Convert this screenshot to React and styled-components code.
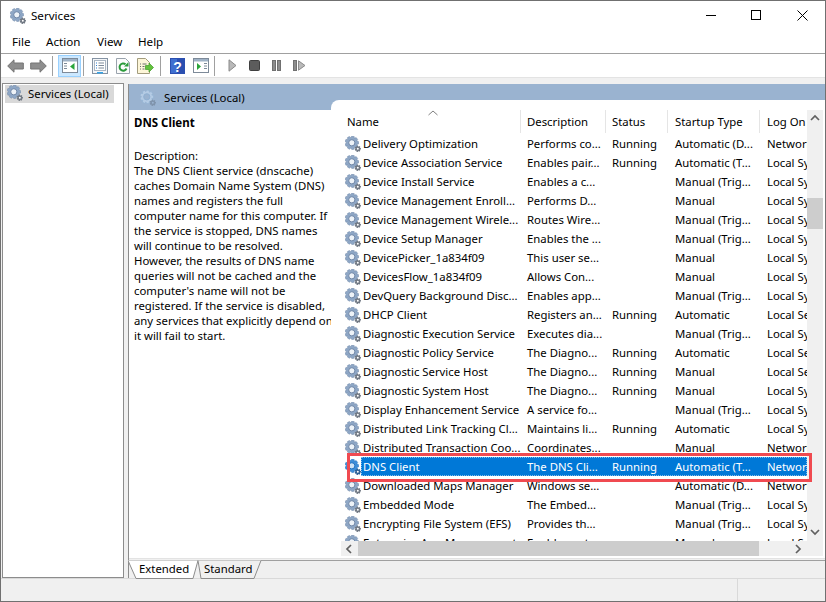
import React from 'react';
import styled, { createGlobalStyle } from 'styled-components';

const GlobalStyle = createGlobalStyle`
  html, body { margin: 0; padding: 0; background: #fff; }
  body { font-family: "Noto Sans", "Liberation Sans", sans-serif; font-size: 11.35px; color: #000; overflow: hidden; }
  * { box-sizing: border-box; }
`;

const Window = styled.div`
  width: 826px;
  height: 602px;
  border: 1px solid #707070;
  display: flex;
  flex-direction: column;
  background: #fff;
`;

const TitleBar = styled.div`
  height: 29px;
  flex: none;
  display: flex;
  align-items: center;
  padding-left: 9px;
`;

const TitleText = styled.span`
  margin-left: 5px;
  font-size: 11.6px;
  flex: 1;
`;

const WinButton = styled.div`
  width: 45.5px;
  height: 29px;
  display: flex;
  align-items: center;
  justify-content: center;
`;

const MenuBar = styled.div`
  height: 24px;
  flex: none;
  display: flex;
  align-items: center;
  padding-left: 11px;
  border-bottom: 1px solid #a0a0a0;
`;

const MenuItem = styled.span`
  width: ${p => p.$w}px;
  font-size: 11.6px;
`;

const Toolbar = styled.div`
  height: 24px;
  flex: none;
  display: flex;
  align-items: center;
  padding-left: 3px;
  border-bottom: 1px solid #e3e3e3;
`;

const ToolButton = styled.div`
  width: ${p => p.$w || 23}px;
  height: 22px;
  display: flex;
  align-items: center;
  justify-content: center;
  background: ${p => (p.$active ? '#cce8ff' : 'transparent')};
  border: 1px solid ${p => (p.$active ? '#99d1ff' : 'transparent')};
`;

const ToolSep = styled.div`
  width: 1px;
  height: 20px;
  background: #a0a0a0;
  margin: 0 ${p => p.$r}px 0 ${p => p.$l}px;
`;

const Main = styled.div`
  flex: 1;
  min-height: 0;
  display: flex;
  gap: 4px;
  padding: 5px 0 0 1px;
  background: #f0f0f0;
`;

const TreePane = styled.div`
  width: 122px;
  background: #fff;
  border: 1px solid #8c8c8c;
  padding: 1px 9px 0 2px;
`;

const TreeItem = styled.div`
  height: 18px;
  background: #d9d9d9;
  display: flex;
  align-items: center;
  gap: 5px;
  padding: 0 0 2px 2px;
`;

const RightPane = styled.div`
  flex: 1;
  min-width: 0;
  margin-top: 1px;
  display: flex;
  flex-direction: column;
  border-left: 1px solid #8c8c8c;
`;

const Band = styled.div`
  height: 26px;
  flex: none;
  background: #9ab3d0;
  display: flex;
  align-items: flex-start;
  gap: 8px;
  padding: 6px 0 0 11px;
  line-height: 16px;
`;

const Body = styled.div`
  height: 449px;
  flex: none;
  display: flex;
  background: #fff;
  border-bottom: 1px solid #e3e3e3;
`;

const Details = styled.div`
  width: 202px;
  flex: none;
  padding: 5px 0 0 5px;
  line-height: 15px;
  white-space: nowrap;
`;

const DetailsTitle = styled.div`
  font-weight: 700;
  font-size: 11.5px;
  margin-bottom: 18px;
`;

const ListPanel = styled.div`
  position: relative;
  flex: 1;
  min-width: 0;
  margin-top: -10px;
  padding: 10px 2px 1px 10px;
  background: #fff;
  border-top-left-radius: 8px;
  display: grid;
  grid-template-columns: 466px 16px;
  grid-template-rows: 431px 15px;
`;

const Table = styled.div`
  overflow: hidden;
  min-width: 0;
`;

const HeaderRow = styled.div`
  display: flex;
  height: 24px;
  white-space: nowrap;
`;

const HeaderCell = styled.div`
  position: relative;
  flex: none;
  width: ${p => p.$w}px;
  height: 23px;
  padding-left: ${p => p.$pad}px;
  line-height: 23px;
  border-right: ${p => (p.$last ? 'none' : '1px solid #e5e5e5')};
`;

const SortCaret = styled.svg`
  position: absolute;
  left: 86px;
  top: 0;
`;

const Row = styled.div`
  display: flex;
  height: 19px;
  white-space: nowrap;
`;

const RowIcon = styled.div`
  width: 20px;
  flex: none;
  padding: 2px 0 0 4px;
`;

const RowCells = styled.div`
  flex: none;
  width: 446px;
  display: flex;
  line-height: 19px;
  background: ${p => (p.$selected ? '#0078d7' : 'transparent')};
  color: ${p => (p.$selected ? '#fff' : '#000')};
  outline: ${p => (p.$selected ? '1px dotted #ffffff80' : 'none')};
  outline-offset: -1px;
`;

const Cell = styled.div`
  flex: none;
  width: ${p => p.$w}px;
  padding-left: ${p => p.$pad}px;
  overflow: hidden;
`;

const VScroll = styled.div`
  background: #f0f0f0;
  display: flex;
  flex-direction: column;
  align-items: center;
`;

const ScrollArrow = styled.div`
  height: ${p => p.$h}px;
  width: ${p => p.$w}px;
  flex: none;
  display: flex;
  align-items: center;
  justify-content: center;
`;

const VThumb = styled.div`
  width: 16px;
  height: 31px;
  margin-top: 71px;
  background: #cdcdcd;
`;

const HScroll = styled.div`
  background: #f0f0f0;
  display: flex;
`;

const HThumb = styled.div`
  width: 401px;
  background: #cdcdcd;
`;

const Corner = styled.div`
  background: #f0f0f0;
`;

const Spacer = styled.div`
  flex: 1;
`;

const Highlight = styled.div`
  position: absolute;
  left: 16px;
  top: 353px;
  width: 465px;
  height: 29px;
  border: 3px solid #f04a50;
  pointer-events: none;
`;

const TabStrip = styled.div`
  height: 19px;
  flex: none;
  margin-top: 1px;
  display: flex;
  border-top: 1px solid #a0a0a0;
  background: #f0f0f0;
`;

const Tab = styled.div`
  position: relative;
  width: ${p => p.$w}px;
  height: 19px;
  margin-top: -1px;
  margin-left: ${p => p.$l}px;
  flex: none;
  line-height: 17px;
  padding-left: ${p => p.$pad}px;
`;

const TabShape = styled.svg`
  position: absolute;
  left: 0;
  top: 0;
`;

const TabLabel = styled.span`
  position: relative;
`;

const StatusBar = styled.div`
  height: 23px;
  flex: none;
  display: flex;
  justify-content: flex-end;
  background: #f0f0f0;
  border-top: 1px solid #d9d9d9;
`;

const StatusCell = styled.div`
  width: ${p => p.$w}px;
  border-left: 1px solid #d9d9d9;
`;

const gearPath = (cx, cy, outer, inner, teeth) => {
  const step = (Math.PI * 2) / teeth;
  let d = '';
  for (let i = 0; i < teeth; i++) {
    const a = i * step;
    const pts = [
      [inner, a - step * 0.5],
      [outer, a - step * 0.25],
      [outer, a + step * 0.25],
    ];
    pts.forEach(([r, t], j) => {
      const x = (cx + r * Math.cos(t)).toFixed(2);
      const y = (cy + r * Math.sin(t)).toFixed(2);
      d += `${i === 0 && j === 0 ? 'M' : 'L'}${x} ${y} `;
    });
  }
  return d + 'Z';
};

const BIG_GEAR = gearPath(6.8, 6.8, 6.8, 5.2, 9);
const SMALL_GEAR = gearPath(12.8, 12.8, 3.2, 2.2, 7);

const Gear = ({ tone = 'plain' }) => {
  const big = { plain: '#8ea7c6', blue: '#3f8ed8', band: '#b4cbe4' }[tone];
  const edge = { plain: '#6f86a6', blue: '#1f6fc0', band: '#8fb0d2' }[tone];
  const hole = { plain: '#eef3f8', blue: '#cfe3f6', band: '#9ab3d0' }[tone];
  const small = { plain: '#6f7782', blue: '#2a5f95', band: '#7f93ab' }[tone];
  return (
    <svg width="16" height="16" viewBox="0 0 16 16">
      <path d={BIG_GEAR} fill={big} stroke={edge} strokeWidth="0.5" />
      <circle cx="6.8" cy="6.8" r="3.1" fill={hole} stroke={edge} strokeWidth="1" />
      <path d={SMALL_GEAR} fill={small} />
      <circle cx="12.8" cy="12.8" r="1" fill={tone === 'band' ? '#9ab3d0' : '#fff'} />
    </svg>
  );
};

const ArrowIcon = ({ flip }) => (
  <svg width="17" height="14" viewBox="0 0 17 14" style={flip ? { transform: 'scaleX(-1)' } : undefined}>
    <path d="M.7 7 7 .8V4H16.3V10H7V13.2Z" fill="#8e8e8e" stroke="#747474" />
  </svg>
);

const PaneIcon = () => (
  <svg width="16" height="15" viewBox="0 0 16 15">
    <rect x=".5" y=".5" width="15" height="14" fill="#fff" stroke="#7d8a99" />
    <rect x="1" y="1" width="14" height="2.5" fill="#9fb2c6" />
    <path d="M2 5.5h3M2 8h3M2 10.5h3" stroke="#7d8a99" />
    <path d="M12.5 5v7L8 8.5Z" fill="#2aa53a" />
  </svg>
);

const PropsIcon = () => (
  <svg width="16" height="16" viewBox="0 0 16 16">
    <rect x=".5" y=".5" width="15" height="15" fill="#f4f6f8" stroke="#8593a3" />
    <rect x="2.5" y="2.5" width="11" height="10" fill="#fff" stroke="#a9b5c2" />
    <path d="M4 5h1M4 7.5h1M4 10h1" stroke="#2f7fd0" />
    <path d="M6.5 5h5.5M6.5 7.5h5.5M6.5 10h5.5" stroke="#7d8a99" />
    <rect x="5" y="14" width="6" height="1.5" fill="#35a4e8" />
  </svg>
);

const RefreshIcon = () => (
  <svg width="14" height="16" viewBox="0 0 14 16">
    <path d="M.5.5H9.5L13.5 4.5V15.5H.5Z" fill="#fbfbfb" stroke="#9aa3ad" />
    <path d="M10.5 10.5a3.6 3.6 0 1 1-1-4.2" fill="none" stroke="#2a9a3a" strokeWidth="2" />
    <path d="M8 8.5h4.5V4Z" fill="#2a9a3a" />
  </svg>
);

const ExportIcon = () => (
  <svg width="17" height="16" viewBox="0 0 17 16">
    <path d="M.5.5H8.5L12.5 4.5V15.5H.5Z" fill="#fdf6d8" stroke="#a39c7e" />
    <path d="M3 6h1M3 8.5h1M3 11h1M5.5 6h4M5.5 8.5h2M5.5 11h2" stroke="#6e6e6e" />
    <path d="M8.5 7.5H12V5L16.5 9.5 12 14V11.5H8.5Z" fill="#63c23c" stroke="#3f9a25" strokeWidth=".7" />
  </svg>
);

const HelpIcon = () => (
  <svg width="15" height="16" viewBox="0 0 15 16">
    <rect width="15" height="16" fill="#2b4fb0" />
    <rect x="1" y="1" width="6" height="14" fill="#3f6fd0" />
    <text x="7.5" y="13.5" fontSize="14" fontWeight="700" textAnchor="middle" fill="#fff" fontFamily="Liberation Sans, sans-serif">?</text>
  </svg>
);

const ConsoleIcon = () => (
  <svg width="16" height="15" viewBox="0 0 16 15">
    <rect x=".5" y=".5" width="15" height="14" fill="#fff" stroke="#7d8a99" />
    <rect x="1" y="1" width="14" height="2.5" fill="#9fb2c6" />
    <path d="M11 5.5h3M11 8h3M11 10.5h3" stroke="#7d8a99" />
    <path d="M4 5v7L8 8.5Z" fill="#2aa53a" />
  </svg>
);

const PlayIcon = () => (
  <svg width="9" height="13" viewBox="0 0 9 13">
    <path d="M1 .8V12.2L8 6.5Z" fill="#b9b9b9" stroke="#8a8a8a" />
  </svg>
);

const StopIcon = () => (
  <svg width="11" height="11" viewBox="0 0 11 11">
    <rect x=".5" y=".5" width="10" height="10" rx="1" fill="#5c5c5c" stroke="#3f3f3f" />
  </svg>
);

const PauseIcon = () => (
  <svg width="9" height="11" viewBox="0 0 9 11">
    <rect x=".5" y=".5" width="3" height="10" fill="#8c8c8c" stroke="#707070" />
    <rect x="5.5" y=".5" width="3" height="10" fill="#8c8c8c" stroke="#707070" />
  </svg>
);

const ResumeIcon = () => (
  <svg width="13" height="11" viewBox="0 0 13 11">
    <rect x=".5" y=".5" width="3" height="10" fill="#8c8c8c" stroke="#707070" />
    <path d="M5.5.8V10.2L12 5.5Z" fill="#b9b9b9" stroke="#8a8a8a" />
  </svg>
);

const Chevron = ({ dir }) => {
  const paths = {
    up: 'M1 6 5 2 9 6',
    down: 'M1 2 5 6 9 2',
    left: 'M6 1 2 5 6 9',
    right: 'M2 1 6 5 2 9',
  };
  return (
    <svg width="10" height="10" viewBox="0 0 10 10">
      <path d={paths[dir]} fill="none" stroke="#606060" strokeWidth="1.7" />
    </svg>
  );
};

const NET = 'Network S...';
const SYS = 'Local Syste...';
const SVC = 'Local Service';

const services = [
  ['Delivery Optimization', 'Performs co...', 'Running', 'Automatic (D...', NET],
  ['Device Association Service', 'Enables pair...', 'Running', 'Automatic (T...', SYS],
  ['Device Install Service', 'Enables a c...', '', 'Manual (Trig...', SYS],
  ['Device Management Enroll...', 'Performs D...', '', 'Manual', SYS],
  ['Device Management Wirele...', 'Routes Wire...', '', 'Manual (Trig...', SYS],
  ['Device Setup Manager', 'Enables the ...', '', 'Manual (Trig...', SYS],
  ['DevicePicker_1a834f09', 'This user se...', '', 'Manual', SYS],
  ['DevicesFlow_1a834f09', 'Allows Con...', '', 'Manual', SYS],
  ['DevQuery Background Disc...', 'Enables app...', '', 'Manual (Trig...', SYS],
  ['DHCP Client', 'Registers an...', 'Running', 'Automatic', SVC],
  ['Diagnostic Execution Service', 'Executes dia...', '', 'Manual (Trig...', SYS],
  ['Diagnostic Policy Service', 'The Diagno...', 'Running', 'Automatic', SVC],
  ['Diagnostic Service Host', 'The Diagno...', 'Running', 'Manual', SVC],
  ['Diagnostic System Host', 'The Diagno...', 'Running', 'Manual', SYS],
  ['Display Enhancement Service', 'A service fo...', '', 'Manual (Trig...', SYS],
  ['Distributed Link Tracking Cl...', 'Maintains li...', 'Running', 'Automatic', SYS],
  ['Distributed Transaction Coo...', 'Coordinates...', '', 'Manual', NET],
  ['DNS Client', 'The DNS Cli...', 'Running', 'Automatic (T...', NET],
  ['Downloaded Maps Manager', 'Windows se...', '', 'Automatic (D...', NET],
  ['Embedded Mode', 'The Embed...', '', 'Manual (Trig...', SYS],
  ['Encrypting File System (EFS)', 'Provides th...', '', 'Manual (Trig...', SYS],
  ['Enterprise App Management...', 'Enables ent...', '', 'Manual', SYS],
];

const descriptionLines = [
  'Description:',
  'The DNS Client service (dnscache)',
  'caches Domain Name System (DNS)',
  'names and registers the full',
  'computer name for this computer. If',
  'the service is stopped, DNS names',
  'will continue to be resolved.',
  'However, the results of DNS name',
  'queries will not be cached and the',
  "computer's name will not be",
  'registered. If the service is disabled,',
  'any services that explicitly depend on',
  'it will fail to start.',
];

const App = () => (
  <Window>
    <GlobalStyle />
    <TitleBar>
      <Gear />
      <TitleText>Services</TitleText>
      <WinButton>
        <svg width="11" height="11" viewBox="0 0 11 11"><path d="M0 5.5h10" stroke="#000" /></svg>
      </WinButton>
      <WinButton>
        <svg width="11" height="11" viewBox="0 0 11 11"><rect x=".5" y=".5" width="9" height="9" fill="none" stroke="#000" /></svg>
      </WinButton>
      <WinButton>
        <svg width="11" height="11" viewBox="0 0 11 11"><path d="M.5.5l10 10M10.5.5l-10 10" stroke="#000" /></svg>
      </WinButton>
    </TitleBar>

    <MenuBar>
      <MenuItem $w={34}>File</MenuItem>
      <MenuItem $w={51}>Action</MenuItem>
      <MenuItem $w={41}>View</MenuItem>
      <MenuItem $w={40}>Help</MenuItem>
    </MenuBar>

    <Toolbar>
      <ToolButton><ArrowIcon /></ToolButton>
      <ToolButton><ArrowIcon flip /></ToolButton>
      <ToolSep $l={2} $r={5} />
      <ToolButton $active><PaneIcon /></ToolButton>
      <ToolSep $l={2} $r={4} />
      <ToolButton><PropsIcon /></ToolButton>
      <ToolButton><RefreshIcon /></ToolButton>
      <ToolButton><ExportIcon /></ToolButton>
      <ToolSep $l={3} $r={5} />
      <ToolButton><HelpIcon /></ToolButton>
      <ToolButton><ConsoleIcon /></ToolButton>
      <ToolSep $l={2} $r={6} />
      <ToolButton $w={22}><PlayIcon /></ToolButton>
      <ToolButton $w={22}><StopIcon /></ToolButton>
      <ToolButton><PauseIcon /></ToolButton>
      <ToolButton><ResumeIcon /></ToolButton>
    </Toolbar>

    <Main>
      <TreePane>
        <TreeItem>
          <Gear />
          <span>Services (Local)</span>
        </TreeItem>
      </TreePane>

      <RightPane>
        <Band>
          <Gear tone="band" />
          <span>Services (Local)</span>
        </Band>

        <Body>
          <Details>
            <DetailsTitle>DNS Client</DetailsTitle>
            {descriptionLines.map(line => (
              <div key={line}>{line}</div>
            ))}
          </Details>

          <ListPanel>
            <Table>
              <HeaderRow>
                <HeaderCell $w={180} $pad={6}>
                  Name
                  <SortCaret width="12" height="6" viewBox="0 0 12 6">
                    <path d="M1.5 5 6 1l4.5 4" fill="none" stroke="#808080" />
                  </SortCaret>
                </HeaderCell>
                <HeaderCell $w={85} $pad={6}>Description</HeaderCell>
                <HeaderCell $w={62} $pad={6}>Status</HeaderCell>
                <HeaderCell $w={92} $pad={7}>Startup Type</HeaderCell>
                <HeaderCell $w={47} $pad={7} $last>Log On</HeaderCell>
              </HeaderRow>
              {services.map(([name, desc, status, startup, logon]) => {
                const selected = name === 'DNS Client';
                return (
                  <Row key={name}>
                    <RowIcon><Gear tone={selected ? 'blue' : 'plain'} /></RowIcon>
                    <RowCells $selected={selected}>
                      <Cell $w={160} $pad={2}>{name}</Cell>
                      <Cell $w={85} $pad={6}>{desc}</Cell>
                      <Cell $w={62} $pad={6}>{status}</Cell>
                      <Cell $w={92} $pad={7}>{startup}</Cell>
                      <Cell $w={47} $pad={7}>{logon}</Cell>
                    </RowCells>
                  </Row>
                );
              })}
            </Table>

            <VScroll>
              <ScrollArrow $h={17} $w={16}><Chevron dir="up" /></ScrollArrow>
              <VThumb />
              <Spacer />
              <ScrollArrow $h={17} $w={16}><Chevron dir="down" /></ScrollArrow>
            </VScroll>

            <HScroll>
              <ScrollArrow $h={15} $w={17}><Chevron dir="left" /></ScrollArrow>
              <HThumb />
              <Spacer />
              <ScrollArrow $h={15} $w={17}><Chevron dir="right" /></ScrollArrow>
            </HScroll>
            <Corner />

            <Highlight />
          </ListPanel>
        </Body>

        <TabStrip>
          <Tab $w={69} $l={-1} $pad={11}>
            <TabShape width="70" height="19" viewBox="0 0 70 19">
              <path d="M0 .5 8 18.5H65L70 .5Z" fill="#fff" />
              <path d="M0 .5 8 18.5H65L70 .5" fill="none" stroke="#8c8c8c" />
            </TabShape>
            <TabLabel>Extended</TabLabel>
          </Tab>
          <Tab $w={65} $l={0} $pad={7}>
            <TabShape width="65" height="19" viewBox="0 0 65 19">
              <path d="M1 .5 4 18.5H57L64 .5" fill="#f0f0f0" stroke="#8c8c8c" />
            </TabShape>
            <TabLabel>Standard</TabLabel>
          </Tab>
        </TabStrip>
      </RightPane>
    </Main>

    <StatusBar>
      <StatusCell $w={88} />
    </StatusBar>
  </Window>
);

export default App;
